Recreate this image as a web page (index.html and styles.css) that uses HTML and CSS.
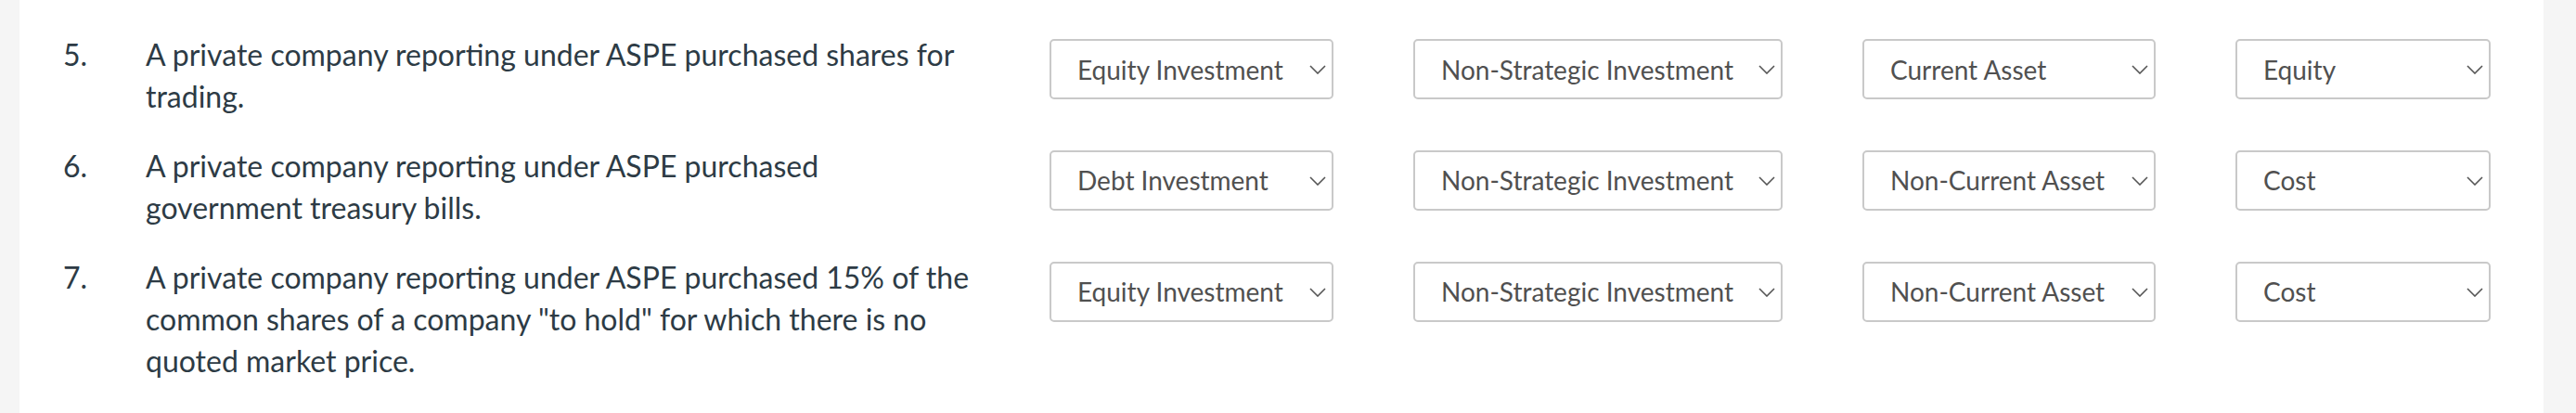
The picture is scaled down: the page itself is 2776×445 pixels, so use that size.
FILE: index.html
```html
<!DOCTYPE html>
<html lang="en">
<head>
<meta charset="utf-8">
<title>Classification</title>
<link rel="stylesheet" href="styles.css">
</head>
<body>
<div class="page">
  <div class="row">
    <div class="num">5.</div>
    <div class="q">A private company reporting under ASPE purchased shares for trading.</div>
    <div class="selects">
      <div class="sel c1"><select><option>Equity Investment</option></select><svg class="chev" viewBox="0 0 18 10"><path d="M1 1 L9 9 L17 1"/></svg></div>
      <div class="sel c2"><select><option>Non-Strategic Investment</option></select><svg class="chev" viewBox="0 0 18 10"><path d="M1 1 L9 9 L17 1"/></svg></div>
      <div class="sel c3"><select><option>Current Asset</option></select><svg class="chev" viewBox="0 0 18 10"><path d="M1 1 L9 9 L17 1"/></svg></div>
      <div class="sel c4"><select><option>Equity</option></select><svg class="chev" viewBox="0 0 18 10"><path d="M1 1 L9 9 L17 1"/></svg></div>
    </div>
  </div>
  <div class="row">
    <div class="num">6.</div>
    <div class="q">A private company reporting under ASPE purchased government treasury bills.</div>
    <div class="selects">
      <div class="sel c1"><select><option>Debt Investment</option></select><svg class="chev" viewBox="0 0 18 10"><path d="M1 1 L9 9 L17 1"/></svg></div>
      <div class="sel c2"><select><option>Non-Strategic Investment</option></select><svg class="chev" viewBox="0 0 18 10"><path d="M1 1 L9 9 L17 1"/></svg></div>
      <div class="sel c3"><select><option>Non-Current Asset</option></select><svg class="chev" viewBox="0 0 18 10"><path d="M1 1 L9 9 L17 1"/></svg></div>
      <div class="sel c4"><select><option>Cost</option></select><svg class="chev" viewBox="0 0 18 10"><path d="M1 1 L9 9 L17 1"/></svg></div>
    </div>
  </div>
  <div class="row">
    <div class="num">7.</div>
    <div class="q">A private company reporting under ASPE purchased 15% of the common shares of a company "to hold" for which there is no quoted market price.</div>
    <div class="selects">
      <div class="sel c1"><select><option>Equity Investment</option></select><svg class="chev" viewBox="0 0 18 10"><path d="M1 1 L9 9 L17 1"/></svg></div>
      <div class="sel c2"><select><option>Non-Strategic Investment</option></select><svg class="chev" viewBox="0 0 18 10"><path d="M1 1 L9 9 L17 1"/></svg></div>
      <div class="sel c3"><select><option>Non-Current Asset</option></select><svg class="chev" viewBox="0 0 18 10"><path d="M1 1 L9 9 L17 1"/></svg></div>
      <div class="sel c4"><select><option>Cost</option></select><svg class="chev" viewBox="0 0 18 10"><path d="M1 1 L9 9 L17 1"/></svg></div>
    </div>
  </div>
</div>
</body>
</html>
```

FILE: styles.css
```css
html, body {
  margin: 0;
  padding: 0;
  background: #f5f5f5;
}
body {
  font-family: Lato, "Open Sans", sans-serif;
  color: #2d3b45;
}
.page {
  box-sizing: border-box;
  margin: 0 35px 0 21px;
  height: 445px;
  background: #ffffff;
  padding: 37px 0 0 47px;
  overflow: hidden;
}
.row {
  display: flex;
  align-items: flex-start;
  margin-bottom: 30.4px;
}
.num {
  flex: 0 0 89px;
  font-size: 32px;
  line-height: 44.8px;
}
.q {
  flex: 0 0 889px;
  margin-right: 85px;
  font-size: 32px;
  line-height: 44.8px;
}
.selects {
  display: flex;
  gap: 86px;
  margin-top: 5px;
}
.sel {
  position: relative;
  box-sizing: border-box;
  height: 65px;
  border: 2px solid #c9c9c9;
  border-radius: 5px;
  background: #fff;
}
.sel select {
  appearance: none;
  -webkit-appearance: none;
  border: 0;
  background: transparent;
  width: 100%;
  height: 100%;
  margin: 0;
  padding: 0 40px 0 28px;
  font-family: Lato, "Open Sans", sans-serif;
  font-size: 28px;
  color: #505050;
  outline: none;
}
.chev {
  position: absolute;
  right: 6px;
  top: 26px;
  width: 18px;
  height: 10px;
  fill: none;
  stroke: #555555;
  stroke-width: 1.6;
}
.c1 { width: 306px; }
.c2 { width: 398px; }
.c3 { width: 316px; }
.c4 { width: 275px; }
```
